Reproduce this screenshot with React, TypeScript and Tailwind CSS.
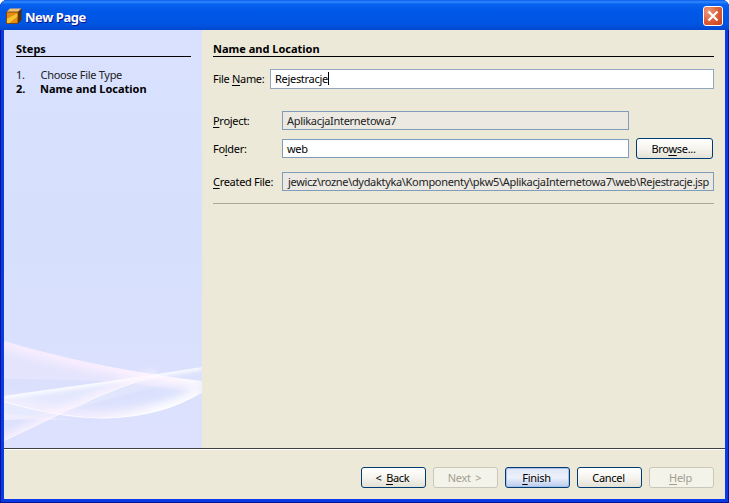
function Btn({ u, rest, pre = "", kind = "normal", w = "w-[65px]" }: { u: string; rest: string; pre?: string; kind?: "normal" | "off" | "def"; w?: string }) {
  const cls =
    kind === "off"
      ? "border-[#c9c7ba] text-[#a19e8f] bg-[#f4f3ea]"
      : kind === "def"
        ? "border-[#003c74] text-black bg-gradient-to-b from-[#dfe7f8] via-[#ecf0f9] to-[#b9cbee] shadow-[inset_0_0_0_1px_#a9c0ea]"
        : "border-[#003c74] text-black bg-gradient-to-b from-white via-[#f5f4ee] to-[#e4e1d5]";
  return (
    <div className={`${w} h-[21px] shrink-0 rounded-[3px] border flex items-center justify-center tracking-[-0.3px] [word-spacing:2px] pr-[2px] ${cls}`}>
      <span>
        {pre}
        <span className="underline underline-offset-2">{u}</span>
        {rest}
      </span>
    </div>
  );
}

function Label({ u, pre = "", rest, w }: { u: string; pre?: string; rest: string; w: string }) {
  return (
    <div className={`${w} shrink-0 text-black tracking-[-0.3px]`}>
      {pre}
      <span className="underline underline-offset-2">{u}</span>
      {rest}
    </div>
  );
}

const curveA = "M0 13 C50 28 120 44 198 53";
const curveB = "M0 68 C70 58 130 50 198 39";
const curveC = "M0 74 C40 86 80 92 110 90 C150 88 180 76 198 64";
const curveD = "M0 113 C40 95 100 62 153 48";

function Waves() {
  return (
    <svg className="absolute left-0 bottom-0" width="198" height="120" viewBox="0 0 198 120">
      <defs>
        <filter id="b2" filterUnits="userSpaceOnUse" x="-20" y="-20" width="240" height="160">
          <feGaussianBlur stdDeviation="2" />
        </filter>
        <filter id="b5" filterUnits="userSpaceOnUse" x="-20" y="-20" width="240" height="160">
          <feGaussianBlur stdDeviation="5" />
        </filter>
        <clipPath id="belowA"><path d={`${curveA} L198 120 L0 120 Z`} /></clipPath>
        <clipPath id="belowB"><path d={`${curveB} L198 120 L0 120 Z`} /></clipPath>
        <clipPath id="aboveC"><path d={`${curveC} L198 0 L0 0 Z`} /></clipPath>
        <clipPath id="aboveD"><path d={`${curveD} L153 0 L0 0 Z`} /></clipPath>
        <linearGradient id="sA" gradientUnits="userSpaceOnUse" x1="0" x2="198" y1="0" y2="0">
          <stop offset="0" stopColor="#fff0ff" stopOpacity="0.75" />
          <stop offset="0.5" stopColor="#fff0ff" stopOpacity="0.85" />
          <stop offset="0.85" stopColor="#fff6ff" stopOpacity="1" />
          <stop offset="1" stopColor="#fff" stopOpacity="0.9" />
        </linearGradient>
        <linearGradient id="sC" gradientUnits="userSpaceOnUse" x1="0" x2="198" y1="0" y2="0">
          <stop offset="0" stopColor="#fff0ff" stopOpacity="0.4" />
          <stop offset="0.5" stopColor="#fff4ff" stopOpacity="0.8" />
          <stop offset="0.8" stopColor="#fff" stopOpacity="1" />
          <stop offset="1" stopColor="#fff" stopOpacity="0.9" />
        </linearGradient>
        <linearGradient id="bodyB" gradientUnits="userSpaceOnUse" x1="0" x2="198" y1="0" y2="0">
          <stop offset="0" stopColor="#fff" stopOpacity="0.32" />
          <stop offset="0.5" stopColor="#fff" stopOpacity="0.2" />
          <stop offset="1" stopColor="#fff" stopOpacity="0.05" />
        </linearGradient>
      </defs>
      <path d={`${curveA} L198 66 C150 56 90 51 0 51 Z`} fill="#fff0ff" opacity="0.28" />
      <path d={`${curveB} L198 53 C130 56 60 92 0 92 Z`} fill="url(#bodyB)" />
      <path d="M0 85 L70 92 H0 Z" fill="#fdf0ff" opacity="0.35" />
      <g clipPath="url(#belowA)">
        <path d={curveA} fill="none" stroke="url(#sA)" strokeWidth="14" filter="url(#b5)" />
      </g>
      <g clipPath="url(#aboveC)">
        <path d={curveC} fill="none" stroke="url(#sC)" strokeWidth="14" filter="url(#b5)" />
        <path d={curveC} fill="none" stroke="#fff" strokeWidth="2" opacity="0.7" />
      </g>
      <g clipPath="url(#belowB)">
        <path d={curveB} fill="none" stroke="#fff" strokeWidth="5" filter="url(#b2)" />
      </g>
      <g clipPath="url(#aboveD)">
        <path d={curveD} fill="none" stroke="#fff4ff" strokeWidth="9" filter="url(#b5)" />
        <path d={curveD} fill="none" stroke="#fff" strokeWidth="1.5" opacity="0.6" />
      </g>
    </svg>
  );
}

export default function App() {
  return (
    <div
      className="w-[729px] h-[503px] flex flex-col overflow-hidden bg-[#0a3ae6] rounded-t-[7px] shadow-[inset_1px_0_#00158f,inset_-1px_0_#00158f,inset_0_-1px_#00158f] text-[11px] leading-[11px]"
      style={{ fontFamily: '"Noto Sans", "DejaVu Sans", sans-serif' }}
    >
      <div className="h-[30px] shrink-0 flex items-center pl-[6px] pr-[6px] bg-[linear-gradient(180deg,#0a5ae8_0px,#2f8cff_2px,#0a63f0_4px,#0058e8_10px,#0055e2_24px,#0148d0_30px)]">
        <svg width="16" height="16" viewBox="0 0 16 16" className="mr-[3px] mt-[2px]">
          <path d="M0.5 4 L4 0.5 H15.5 L12 4 Z" fill="#f3c070" />
          <path d="M0.5 4 H12 V15.5 H0.5 Z" fill="#e58a12" />
          <path d="M0.5 11 L12 5 V8 L3 15.5 H0.5 Z" fill="#f7c230" />
          <path d="M12 4 L15.5 0.5 V12 L12 15.5 Z" fill="#53300a" />
          <path d="M0.5 4 H12 V15.5 H0.5 Z" fill="none" stroke="#6b3a0a" strokeWidth="0.8" />
        </svg>
        <span
          className="font-bold text-white text-[13px] leading-[16px] mt-[3px] tracking-[-0.45px] [text-shadow:1px_1px_#0f1089]"
          style={{ fontFamily: '"Noto Sans", sans-serif' }}
        >
          New Page
        </span>
        <div className="ml-auto w-[20px] h-[20px] mt-[2px] rounded-[3px] border border-white bg-[radial-gradient(circle_at_25%_25%,#ec9a7c,#dc5a34_55%,#c4411c)] flex items-center justify-center">
          <svg width="12" height="12" viewBox="0 0 12 12">
            <path d="M1.5 1.5 L10.5 10.5 M10.5 1.5 L1.5 10.5" stroke="#fff" strokeWidth="2.3" />
          </svg>
        </div>
      </div>

      <div className="flex-1 mx-[4px] mb-[4px] bg-[#ece9d8] flex flex-col min-h-0">
        <div className="h-[418px] flex shrink-0">
          <div className="w-[198px] relative bg-gradient-to-b from-[#d9e1fe] via-[#d6e0fd] to-[#dde1fd] pt-[13px] px-[12px] shrink-0">
            <Waves />
            <div className="relative">
              <div className="font-bold border-b border-black h-[14px] text-black w-[175px]">Steps</div>
              <div className="mt-[12px] flex text-[#222] tracking-[-0.3px]">
                <span className="w-[25px]">1.</span>
                <span className="-ml-[0.5px]">Choose File Type</span>
              </div>
              <div className="mt-[3px] flex font-bold text-black -ml-[1px]">
                <span className="w-[25px] pl-[1px]">2.</span>
                <span>Name and Location</span>
              </div>
            </div>
          </div>

          <div className="flex-1 min-w-0 pt-[13px] pl-[11px] pr-[11px] flex flex-col">
            <div className="font-bold border-b border-black h-[14px] text-black">Name and Location</div>
            <div className="mt-[11px] flex items-center h-[21px]">
              <Label pre="File " u="N" rest="ame:" w="w-[57px]" />
              <div className="flex-1 h-[20px] border border-[#94a6bb] bg-white flex items-center pl-[4px] text-black tracking-[-0.3px]">
                Rejestracje<span className="w-px h-[13px] bg-black" />
              </div>
            </div>

            <div className="mt-[21px] flex items-center h-[21px]">
              <Label u="P" rest="roject:" w="w-[69px]" />
              <div className="w-[347px] h-[19px] border border-[#7f9db9] bg-[#ebe9e1] flex items-center pl-[4px] text-[#222] tracking-[-0.3px]">AplikacjaInternetowa7</div>
            </div>

            <div className="mt-[7px] flex items-center h-[21px]">
              <Label pre="Fo" u="l" rest="der:" w="w-[69px]" />
              <div className="w-[347px] h-[19px] border border-[#7f9db9] bg-white flex items-center pl-[4px] text-black tracking-[-0.3px]">web</div>
              <div className="ml-[7px]">
                <Btn u="w" pre="Bro" rest="se..." w="w-[77px]" />
              </div>
            </div>

            <div className="mt-[12px] flex items-center h-[21px]">
              <Label u="C" rest="reated File:" w="w-[69px]" />
              <div className="flex-1 min-w-0 h-[19px] border border-[#7f9db9] bg-[#ebe9e1] flex items-center justify-end pr-[4px] overflow-hidden whitespace-nowrap text-[#222] tracking-[-0.32px]">
                jewicz\rozne\dydaktyka\Komponenty\pkw5\AplikacjaInternetowa7\web\Rejestracje.jsp
              </div>
            </div>

            <div className="mt-[11px] h-px bg-[#aca899]" />
          </div>
        </div>

        <div className="h-px bg-[#3f3f3f] shrink-0" />
        <div className="h-px bg-white shrink-0" />

        <div className="flex-1 flex justify-end items-start gap-[7px] pt-[17px] pr-[11px]">
          <Btn pre="< " u="B" rest="ack" />
          <Btn u="" rest="Next >" kind="off" />
          <Btn u="F" rest="inish" kind="def" />
          <Btn u="" rest="Cancel" />
          <Btn u="H" rest="elp" kind="off" />
        </div>
      </div>
    </div>
  );
}
